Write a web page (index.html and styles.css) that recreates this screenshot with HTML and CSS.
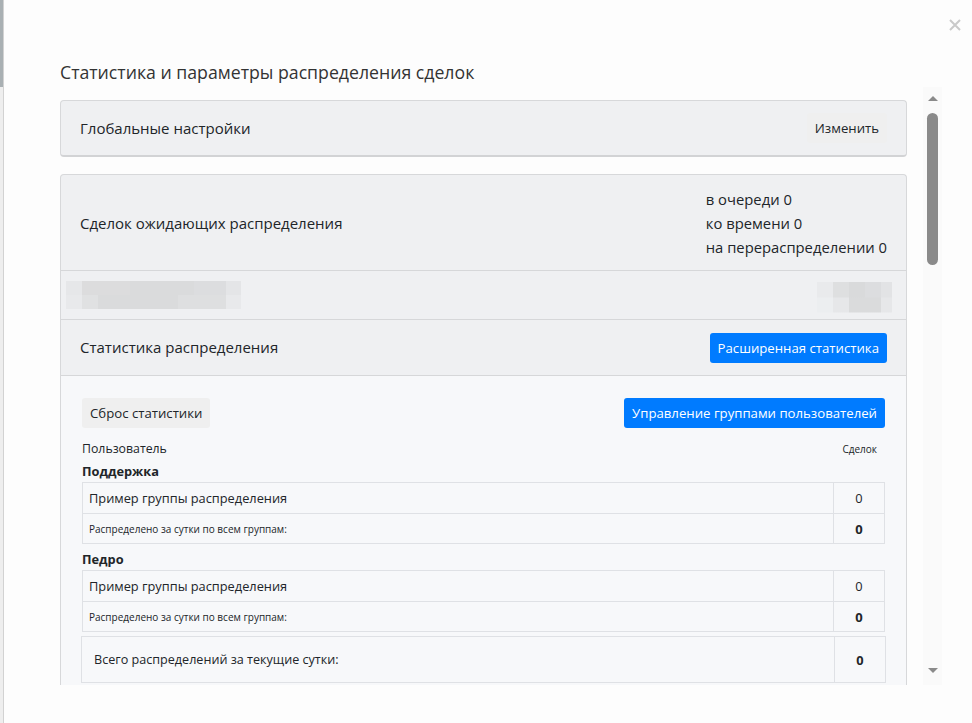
FILE: index.html
```html
<!DOCTYPE html>
<html lang="ru">
<head>
    <meta charset="UTF-8">
    <meta name="viewport" content="width=device-width, initial-scale=1.0">
    <title>Статистика распределения</title>
    <link rel="stylesheet" href="styles.css">
</head>
<body>
    <div class="page-edge"></div>

    <div class="modal">
        <button class="modal-close" aria-label="Закрыть">
            <svg width="14" height="14" viewBox="0 0 14 14"><path d="M2 2L12 12M12 2L2 12" stroke="#c9c9c9" stroke-width="2"/></svg>
        </button>
        <h2 class="modal-title">Статистика и параметры распределения сделок</h2>

        <div class="scroll-area">
            <div class="scroll-content">
                <div class="card">
                    <div class="card-row global-row">
                        <span>Глобальные настройки</span>
                        <button class="btn btn-light">Изменить</button>
                    </div>
                </div>

                <div class="card card-stats">
                    <div class="card-row queue-row">
                        <span>Сделок ожидающих распределения</span>
                        <div class="queue-list">
                            <div>в очереди 0</div>
                            <div>ко времени 0</div>
                            <div>на перераспределении 0</div>
                        </div>
                    </div>
                    <div class="card-row blur-row">
                        <div class="blur blur-left"></div>
                        <div class="blur blur-right"></div>
                    </div>
                    <div class="card-row stat-row">
                        <span>Статистика распределения</span>
                        <button class="btn btn-primary">Расширенная статистика</button>
                    </div>
                    <div class="card-body">
                        <div class="toolbar">
                            <button class="btn btn-light">Сброс статистики</button>
                            <button class="btn btn-primary">Управление группами пользователей</button>
                        </div>
                        <div class="list-head">
                            <span class="head-user">Пользователь</span>
                            <span class="head-count">Сделок</span>
                        </div>

                        <div class="user-name">Поддержка</div>
                        <table class="stat-table">
                            <tr>
                                <td>Пример группы распределения</td>
                                <td class="num">0</td>
                            </tr>
                            <tr class="day-row">
                                <td>Распределено за сутки по всем группам:</td>
                                <td class="num strong">0</td>
                            </tr>
                        </table>

                        <div class="user-name">Педро</div>
                        <table class="stat-table">
                            <tr>
                                <td>Пример группы распределения</td>
                                <td class="num">0</td>
                            </tr>
                            <tr class="day-row">
                                <td>Распределено за сутки по всем группам:</td>
                                <td class="num strong">0</td>
                            </tr>
                        </table>

                        <table class="stat-table total-table">
                            <tr>
                                <td class="total-label">Всего распределений за текущие сутки:</td>
                                <td class="num strong">0</td>
                            </tr>
                        </table>
                    </div>
                </div>
            </div>

            <div class="scrollbar">
                <div class="scroll-arrow up"></div>
                <div class="scroll-thumb"></div>
                <div class="scroll-arrow down"></div>
            </div>
        </div>
    </div>
</body>
</html>
```

FILE: styles.css
```css
body {
    margin: 0;
    display: flex;
    height: 723px;
    overflow: hidden;
    background: #fff;
    font-family: "Open Sans", "Noto Sans", sans-serif;
    color: #212529;
}
.page-edge {
    width: 3px;
    flex-shrink: 0;
    background: linear-gradient(#a9b0b3 0 87px, #eeeeee 87px);
    border-right: 1px solid #d2d2d2;
}
.modal {
    position: relative;
    flex: 1;
    padding: 60px 0 0 56px;
    background: #fdfdfd;
}
.modal-close {
    position: absolute;
    top: 18px;
    right: 10px;
    padding: 0;
    border: 0;
    background: none;
}
.modal-title {
    margin: 0 0 3px;
    font-size: 17.7px;
    line-height: 24px;
    font-weight: 400;
    color: #333;
}
.scroll-area {
    display: flex;
    height: 598px;
}
.scroll-content {
    width: 847px;
    padding-top: 13px;
    overflow: hidden;
}
.scrollbar {
    width: 19px;
    margin-left: 16px;
    background: #fafafa;
    display: flex;
    flex-direction: column;
    align-items: center;
}
.scroll-arrow {
    width: 0;
    height: 0;
    border-left: 5px solid transparent;
    border-right: 5px solid transparent;
}
.scroll-arrow.up {
    margin-top: 9px;
    border-bottom: 5px solid #8a8a8a;
}
.scroll-arrow.down {
    margin-top: auto;
    margin-bottom: 12px;
    border-top: 5px solid #8a8a8a;
}
.scroll-thumb {
    width: 11px;
    height: 152px;
    margin-top: 12px;
    border-radius: 6px;
    background: #8a8a8a;
}
.card {
    border: 1px solid #d7d8da;
    border-bottom: 2px solid #d2d3d5;
    border-radius: 4px;
    background: #eff0f2;
}
.card-stats {
    margin-top: 17px;
    border-bottom: 0;
    border-radius: 4px 4px 0 0;
}
.card-row {
    display: flex;
    align-items: center;
    justify-content: space-between;
    padding: 0 19px;
    font-size: 15px;
}
.global-row {
    height: 54px;
}
.queue-row {
    height: 95px;
    border-bottom: 1px solid #d6d7d9;
}
.queue-list {
    line-height: 24px;
    white-space: nowrap;
    font-size: 14.8px;
}
.blur-row {
    height: 48px;
    padding: 0 14px 0 5px;
    border-bottom: 1px solid #d6d7d9;
}
.blur {
    height: 28px;
    background-repeat: no-repeat;
    background-size: 100% 50%;
    background-position: top, bottom;
}
.blur-left {
    width: 175px;
    background-image:
        linear-gradient(90deg, #e6e7e9 0 16px, #dcdcdd 16px 64px, #dadbdc 64px 128px, #dcdddf 128px 160px, #e4e5e7 160px),
        linear-gradient(90deg, #e8e9eb 0 16px, #e0e1e2 16px 32px, #dadbdc 32px 112px, #dedfe0 112px 160px, #e8e9eb 160px);
}
.blur-right {
    width: 75px;
    margin-top: 4px;
    height: 31px;
    background-image:
        linear-gradient(90deg, #e9eaec 0 16px, #dedfe0 16px 32px, #d9dadb 32px 48px, #dcdddf 48px 64px, #e2e3e5 64px),
        linear-gradient(90deg, #eceef0 0 16px, #e6e7e9 16px 32px, #dadbdc 32px 64px, #e6e7e9 64px);
}
.stat-row {
    height: 53px;
    padding-bottom: 2px;
    border-bottom: 1px solid #d6d7d9;
}
.stat-row .btn {
    margin-top: 3px;
}
.btn {
    height: 30px;
    padding: 0 8px;
    border: 0;
    border-radius: 3px;
    font-family: inherit;
    font-size: 13.2px;
}
.btn-light {
    background: #efefef;
    color: #212529;
}
.btn-primary {
    background: #007bff;
    color: #fff;
}
.card-body {
    padding: 22px 21px 20px 21px;
    background: #f7f8fa;
}
.toolbar {
    display: flex;
    justify-content: space-between;
}
.list-head {
    display: flex;
    justify-content: space-between;
    align-items: baseline;
    margin-top: 12px;
    height: 18px;
}
.head-user {
    font-size: 12.3px;
}
.head-count {
    font-size: 10px;
    margin-right: 8px;
}
.user-name {
    font-size: 12.8px;
    font-weight: 700;
    line-height: 20px;
    margin-top: 3px;
}
.user-name + .stat-table {
    margin-top: 1px;
}
.stat-table + .user-name {
    margin-top: 5px;
}
.stat-table {
    width: 100%;
    border-collapse: collapse;
    font-size: 12.8px;
}
.stat-table td {
    height: 30px;
    padding: 0 6px;
    border: 1px solid #dfe1e5;
}
.stat-table .num {
    width: 38px;
    text-align: center;
}
.stat-table .strong {
    font-weight: 700;
}
.day-row td {
    height: 29px;
    font-size: 10px;
}
.day-row td.num {
    font-size: 13px;
}
.total-table {
    width: calc(100% + 2px);
    margin: 4px -1px 0;
}
.total-table td {
    height: 45px;
}
.total-table .total-label {
    padding-left: 12px;
    font-size: 12.6px;
}
```
